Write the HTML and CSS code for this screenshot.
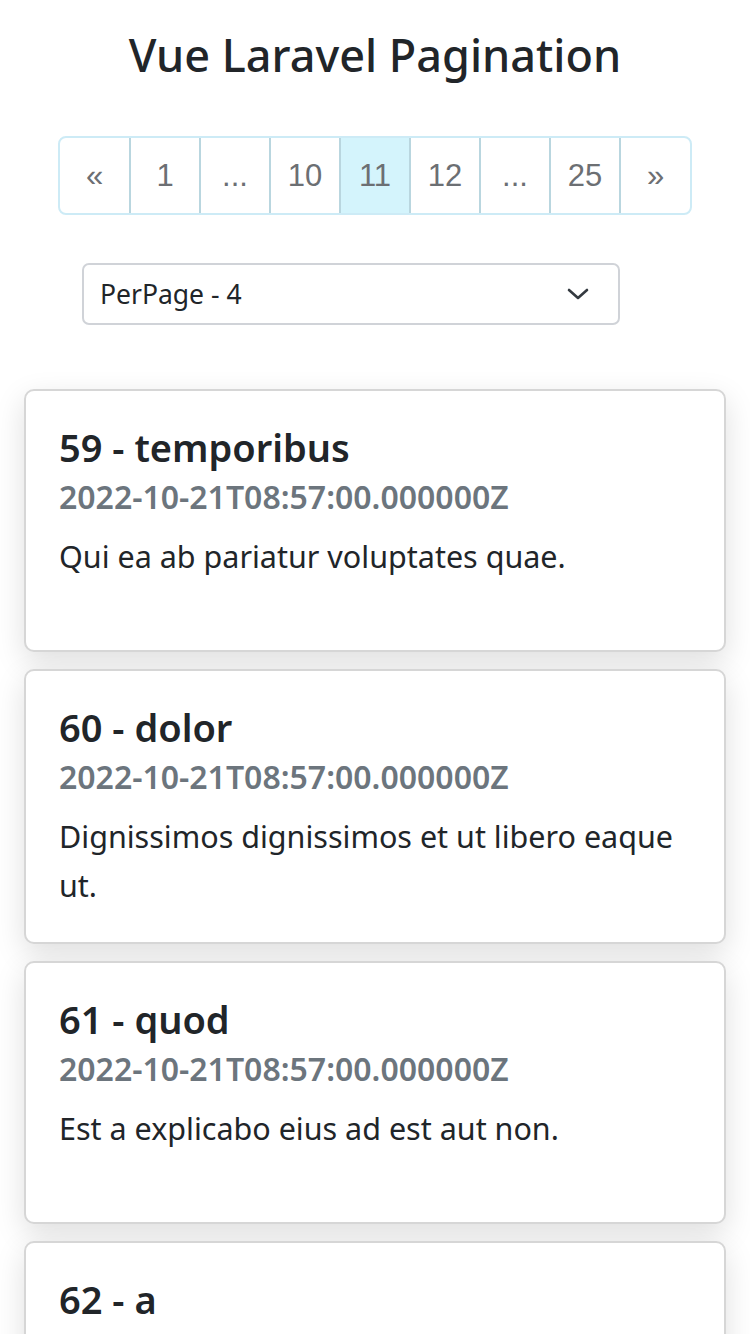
FILE: index.html
```html
<!DOCTYPE html>
<html>
<head>
<meta charset="utf-8">
<link rel="stylesheet" href="styles.css">
</head>
<body>
<div class="app">
  <h1 class="title">Vue Laravel Pagination</h1>
  <nav class="pager">
    <ul class="pagination">
      <li class="page">&laquo;</li>
      <li class="page">1</li>
      <li class="page">...</li>
      <li class="page">10</li>
      <li class="page active">11</li>
      <li class="page">12</li>
      <li class="page">...</li>
      <li class="page">25</li>
      <li class="page">&raquo;</li>
    </ul>
  </nav>
  <div class="select-wrap">
    <div class="select">
      <span>PerPage - 4</span>
      <svg class="chev" width="24" height="16" viewBox="0 0 24 16"><path d="M3 4l9 8 9-8" fill="none" stroke="#343a40" stroke-width="2.6" stroke-linecap="round" stroke-linejoin="round"/></svg>
    </div>
  </div>
  <div class="cards">
    <div class="card">
      <h5 class="card-title">59 - temporibus</h5>
      <h6 class="card-date">2022-10-21T08:57:00.000000Z</h6>
      <p class="card-text">Qui ea ab pariatur voluptates quae.</p>
    </div>
    <div class="card">
      <h5 class="card-title">60 - dolor</h5>
      <h6 class="card-date">2022-10-21T08:57:00.000000Z</h6>
      <p class="card-text">Dignissimos dignissimos et ut libero eaque ut.</p>
    </div>
    <div class="card">
      <h5 class="card-title">61 - quod</h5>
      <h6 class="card-date">2022-10-21T08:57:00.000000Z</h6>
      <p class="card-text">Est a explicabo eius ad est aut non.</p>
    </div>
    <div class="card">
      <h5 class="card-title">62 - a</h5>
      <h6 class="card-date">2022-10-21T08:57:00.000000Z</h6>
      <p class="card-text">Lorem ipsum dolor sit amet.</p>
    </div>
  </div>
</div>
</body>
</html>
```
FILE: styles.css
```css
* { box-sizing: border-box; }
html, body { margin: 0; padding: 0; background: #fff; }
body {
  font-family: "Noto Sans", "Open Sans", sans-serif;
  color: #212529;
  height: 1334px;
  overflow: hidden;
}
.app { padding: 0 24px; }
.title {
  margin: 0;
  padding-top: 27px;
  text-align: center;
  font-size: 45px;
  font-weight: 500;
  line-height: 56px;
}
.pager { display: flex; justify-content: center; margin-top: 53px; }
.pagination {
  display: flex;
  list-style: none;
  margin: 0;
  padding: 0;
  border: 2px solid #cdebf6;
  border-radius: 8px;
  overflow: hidden;
  background: #fff;
}
.page {
  width: 70px;
  height: 75px;
  display: flex;
  align-items: center;
  justify-content: center;
  font-family: "Liberation Sans", Arial, sans-serif;
  font-size: 31px;
  color: #6c6f73;
  border-left: 2px solid #b9d6df;
}
.page:first-child { border-left: none; width: 69px; }
.page:last-child { width: 71px; }
.page.active { background: #d4f4fc; }
.select-wrap { padding-left: 58px; margin-top: 48px; }
.select {
  width: 538px;
  height: 62px;
  border: 2px solid #d0d3d8;
  border-radius: 7px;
  display: flex;
  align-items: center;
  justify-content: space-between;
  padding: 0 28px 0 16px;
  font-size: 26.5px;
  color: #212529;
}
.chev { display: block; }
.cards {
  margin-top: 64px;
  display: flex;
  flex-direction: column;
  gap: 17px;
}
.card {
  min-height: 263px;
  border: 2px solid #d6d6d6;
  border-radius: 10px;
  background: #fff;
  box-shadow: 0 10px 30px rgba(0, 0, 0, 0.13);
  padding: 31px 33px 32px 33px;
}
.card-title {
  margin: 0;
  font-size: 38px;
  font-weight: 600;
  line-height: 50px;
}
.card-date {
  margin: 3px 0 0;
  font-size: 32px;
  font-weight: 600;
  color: #6c757d;
  line-height: 44px;
}
.card-text {
  margin: 13px 0 0;
  font-size: 30.5px;
  line-height: 49px;
}
```
